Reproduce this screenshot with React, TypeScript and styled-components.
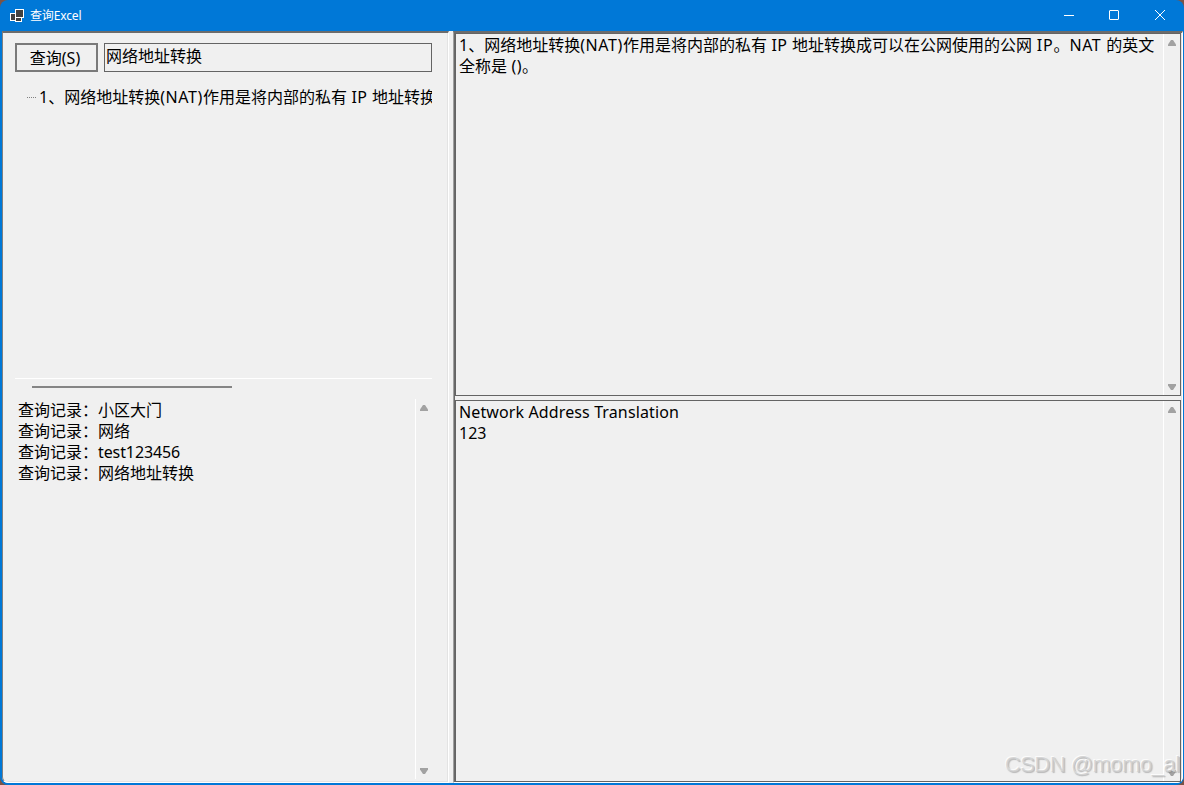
import React from 'react';
import styled, { createGlobalStyle } from 'styled-components';

const GlobalStyle = createGlobalStyle`
  * { box-sizing: border-box; }
  html, body { margin: 0; padding: 0; background: #7b5346; overflow: hidden; }
  button, input { font: inherit; color: inherit; border-radius: 0; }
`;

const Window = styled.div`
  position: relative;
  display: flex;
  flex-direction: column;
  width: 1184px;
  height: 785px;
  padding: 0 1px 2px 2px;
  overflow: hidden;
  border-radius: 8px;
  background: #0078d7;
  color: #000;
  font: 16px/21px 'Noto Sans', 'Noto Sans CJK SC', sans-serif;
`;

const TitleBar = styled.header`
  display: flex;
  flex: none;
  align-items: center;
  height: 31px;
  padding-left: 8px;
  color: #fff;
`;

const Title = styled.span`
  flex: 1;
  margin-left: 6px;
  font-size: 12px;
  line-height: 16px;
  letter-spacing: -0.15px;
`;

const CaptionButtons = styled.div`
  display: grid;
  grid-template-columns: 45px 46px 10px;
  margin-right: 18px;
  margin-top: -1px;
`;

const Body = styled.main`
  display: flex;
  flex: 1;
  min-height: 0;
  background: #f0f0f0;
  border-radius: 0 0 6px 6px;
`;

const SidePanel = styled.section`
  display: flex;
  flex-direction: column;
  width: 447px;
  padding: 10px 16px 3px 12px;
  border-top: 2px solid #6c6c6c;
  border-left: 1px solid #808080;
  border-right: 1px solid #fff;
  border-bottom: 1px solid #fff;
  border-bottom-left-radius: 6px;
  box-shadow: inset -1px -1px #e3e3e3;
`;

const SearchRow = styled.div`
  display: flex;
  gap: 6px;
  height: 29px;
`;

const SearchButton = styled.button`
  width: 83px;
  padding: 1px 3px 0 0;
  border: 2px solid #7a7a7a;
  background: #f0f0f0;
  line-height: 21px;
`;

const SearchInput = styled.input`
  width: 328px;
  padding: 0 1px 3px;
  border: 1px solid #646464;
  outline: none;
  background: #f0f0f0;
`;

const Tree = styled.div`
  height: 307px;
  padding: 15px 0 0 12px;
  width: 417px;
  overflow: hidden;
  border-bottom: 1px solid #fff;
`;

const TreeNode = styled.div`
  display: flex;
  align-items: center;
  gap: 2px;
  white-space: nowrap;
`;

const TreeLine = styled.span`
  flex: none;
  width: 10px;
  height: 1px;
  background: repeating-linear-gradient(90deg, #808080 0 1px, transparent 1px 2px);
`;

const HorizontalThumb = styled.div`
  flex: none;
  width: 200px;
  height: 2px;
  margin: 7px 0 11px 17px;
  background: #858585;
`;

const TextPane = styled.div<{ $height?: number; $framed?: boolean }>`
  display: flex;
  flex: ${p => (p.$height ? 'none' : '1')};
  height: ${p => (p.$height ? `${p.$height}px` : 'auto')};
  min-height: 0;
  border: ${p => (p.$framed ? '1px solid #646464' : '0')};
`;

const Lines = styled.div<{ $left: number; $top: number }>`
  flex: 1;
  padding: ${p => p.$top}px 0 0 ${p => p.$left}px;
  white-space: nowrap;
`;

const Latin = styled.span<{ $spacing?: number }>`
  letter-spacing: ${p => p.$spacing ?? 0}px;
`;

const ScrollTrack = styled.div`
  display: flex;
  flex-direction: column;
  justify-content: space-between;
  align-items: center;
  width: 17px;
  padding: 6px 0 5px;
  border-left: 1px solid #fff;
`;

const RightPanel = styled.section`
  display: flex;
  flex-direction: column;
  flex: 1;
  gap: 4px;
  margin-left: 4px;
  padding: 0 1px;
  border-top: 2px solid #6c6c6c;
  border-left: 1px solid #a0a0a0;
  border-right: 1px solid #fff;
  border-bottom: 1px solid #fff;
  border-bottom-right-radius: 6px;
  box-shadow: inset 1px 0 #696969, inset -1px 0 #e3e3e3;
`;

const Watermark = styled.div`
  position: absolute;
  left: 1005px;
  top: 752px;
  color: rgba(205, 205, 205, 0.8);
  font: 22px/26px 'Liberation Sans', Arial, sans-serif;
  letter-spacing: -0.5px;
  text-shadow: -1px -1px 0 rgba(255, 255, 255, 0.8), 1px 1px 1px rgba(130, 130, 130, 0.5);
  white-space: nowrap;
`;

const Arrow = ({ down = false }: { down?: boolean }) => (
  <svg width="8" height="6" viewBox="0 0 8 6">
    <path
      d={down ? 'M0 0h8v1.4L5 6H3L0 1.4z' : 'M0 6h8V4.6L5 0H3L0 4.6z'}
      fill="#a2a2a2"
    />
  </svg>
);

const Scrollbar = () => (
  <ScrollTrack>
    <Arrow />
    <Arrow down />
  </ScrollTrack>
);

const AppIcon = () => (
  <svg width="14" height="13" viewBox="0 0 14 13" shapeRendering="crispEdges">
    <path d="M5 0h9v9H5zM0 4h6v8H0zM5 8h7v5H5z" fill="#fff" />
    <path d="M6 1h7v7H6zM1 5h4v6H1zM6 9h5v3H6z" fill="#404040" />
  </svg>
);

const Question = () => (
  <>
    1、网络地址转换<Latin $spacing={0.6}>(NAT)</Latin>作用是将内部的私有
    <Latin $spacing={0.4}>{' IP '}</Latin>地址转换
  </>
);

const records = ['小区大门', '网络', 'test123456', '网络地址转换'];

export default function App() {
  return (
    <>
      <GlobalStyle />
      <Window>
        <TitleBar>
          <AppIcon />
          <Title>查询Excel</Title>
          <CaptionButtons>
            <svg width="10" height="10" shapeRendering="crispEdges"><path d="M0 5.5h10" stroke="#fff" /></svg>
            <svg width="10" height="10"><rect x=".5" y=".5" width="9" height="9" rx=".5" fill="none" stroke="#fff" /></svg>
            <svg width="10" height="10"><path d="M0 0l10 10M10 0L0 10" stroke="#fff" /></svg>
          </CaptionButtons>
        </TitleBar>
        <Body>
          <SidePanel>
            <SearchRow>
              <SearchButton>查询(S)</SearchButton>
              <SearchInput defaultValue="网络地址转换" />
            </SearchRow>
            <Tree>
              <TreeNode>
                <TreeLine />
                <span><Question /></span>
              </TreeNode>
            </Tree>
            <HorizontalThumb />
            <TextPane>
              <Lines $left={3} $top={1}>
                {records.map(r => (
                  <div key={r}>查询记录：<Latin $spacing={r.startsWith('test') ? -0.1 : 0}>{r}</Latin></div>
                ))}
              </Lines>
              <Scrollbar />
            </TextPane>
          </SidePanel>
          <RightPanel>
            <TextPane $framed $height={363}>
              <Lines $left={3} $top={1}>
                <div>
                  <Question />成可以在公网使用的公网
                  <Latin $spacing={0.7}>{' IP'}</Latin>。<Latin $spacing={0.6}>{'NAT '}</Latin>的英文
                </div>
                <div>全称是<Latin $spacing={0.4}>{' ()'}</Latin>。</div>
              </Lines>
              <Scrollbar />
            </TextPane>
            <TextPane $framed>
              <Lines $left={3} $top={1}>
                <div><Latin $spacing={0.12}>Network Address Translation</Latin></div>
                <div>123</div>
              </Lines>
              <Scrollbar />
            </TextPane>
          </RightPanel>
        </Body>
        <Watermark>CSDN @momo_al</Watermark>
      </Window>
    </>
  );
}
